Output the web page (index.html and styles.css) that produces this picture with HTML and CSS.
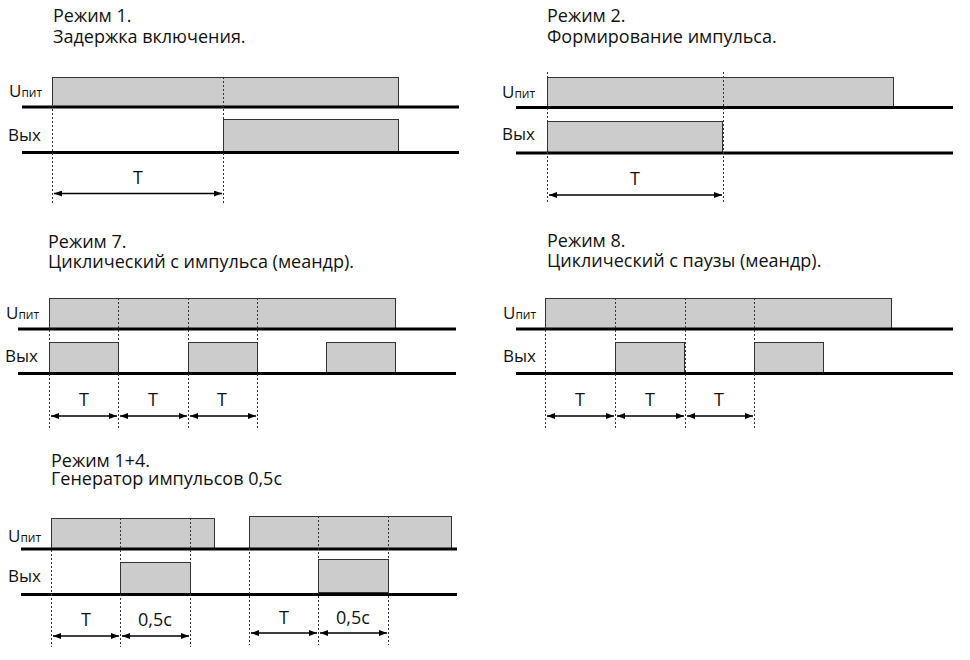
FILE: index.html
```html
<!DOCTYPE html>
<html lang="ru">
<head>
<meta charset="utf-8">
<title>Режимы работы</title>
<link rel="stylesheet" href="styles.css">
</head>
<body>
<svg class="defs" width="0" height="0" aria-hidden="true">
  <defs>
    <marker id="ah" viewBox="0 0 8 6" refX="8" refY="3" markerWidth="8" markerHeight="6" markerUnits="userSpaceOnUse" orient="auto-start-reverse">
      <path d="M0,0 L8,3 L0,6 Z" fill="#000"/>
    </marker>
  </defs>
</svg>
<main class="page">

  <section class="diagram d1">
    <div class="title">Режим 1.<br>Задержка включения.</div>
    <svg class="chart" width="490" height="177" viewBox="0 48 490 177">
      <rect class="box" x="52.5" y="77.5" width="346" height="30"/>
      <rect class="box" x="223.5" y="119.5" width="175" height="33"/>
      <line class="base" x1="22" y1="107" x2="459" y2="107"/>
      <line class="base" x1="22" y1="152.5" x2="459" y2="152.5"/>
      <line class="dash" x1="52.5" y1="77" x2="52.5" y2="204"/>
      <line class="dash" x1="223.5" y1="77" x2="223.5" y2="204"/>
      <text class="lbl" x="9" y="97">U<tspan class="sub">пит</tspan></text>
      <text class="lbl" x="8" y="141">Вых</text>
      <text class="tl" x="138" y="184">T</text>
      <line class="arr" x1="54" y1="193.5" x2="222" y2="193.5"/>
    </svg>
  </section>

  <section class="diagram d2">
    <div class="title">Режим 2.<br>Формирование импульса.</div>
    <svg class="chart" width="480" height="177" viewBox="0 48 480 177">
      <rect class="box" x="57.5" y="77.5" width="346" height="30"/>
      <rect class="box" x="57.5" y="121.5" width="175" height="32"/>
      <line class="base" x1="26" y1="107.5" x2="463" y2="107.5"/>
      <line class="base" x1="26" y1="153" x2="463" y2="153"/>
      <line class="dash" x1="57.5" y1="72" x2="57.5" y2="203"/>
      <line class="dash" x1="233.5" y1="72" x2="233.5" y2="203"/>
      <text class="lbl" x="12" y="98">U<tspan class="sub">пит</tspan></text>
      <text class="lbl" x="12" y="140">Вых</text>
      <text class="tl" x="145" y="185">T</text>
      <line class="arr" x1="59" y1="195" x2="232" y2="195"/>
    </svg>
  </section>

  <section class="diagram d3">
    <div class="title">Режим 7.<br>Циклический с импульса (меандр).</div>
    <svg class="chart" width="490" height="174" viewBox="0 48 490 174">
      <rect class="box" x="49.5" y="73.5" width="346" height="30"/>
      <rect class="box" x="49.5" y="117.5" width="69" height="31"/>
      <rect class="box" x="188.5" y="117.5" width="69" height="31"/>
      <rect class="box" x="326.5" y="117.5" width="69" height="31"/>
      <line class="base" x1="18" y1="104" x2="456" y2="104"/>
      <line class="base" x1="18" y1="148.5" x2="456" y2="148.5"/>
      <line class="dash" x1="49.5" y1="73" x2="49.5" y2="203"/>
      <line class="dash" x1="118.5" y1="73" x2="118.5" y2="203"/>
      <line class="dash" x1="188.5" y1="73" x2="188.5" y2="203"/>
      <line class="dash" x1="257.5" y1="73" x2="257.5" y2="203"/>
      <text class="lbl" x="6" y="94">U<tspan class="sub">пит</tspan></text>
      <text class="lbl" x="5" y="137">Вых</text>
      <text class="tl" x="84" y="181">T</text>
      <text class="tl" x="153" y="181">T</text>
      <text class="tl" x="222" y="181">T</text>
      <line class="arr" x1="51" y1="191" x2="117" y2="191"/>
      <line class="arr" x1="120" y1="191" x2="187" y2="191"/>
      <line class="arr" x1="190" y1="191" x2="256" y2="191"/>
    </svg>
  </section>

  <section class="diagram d4">
    <div class="title">Режим 8.<br>Циклический с паузы (меандр).</div>
    <svg class="chart" width="480" height="174" viewBox="0 48 480 174">
      <rect class="box" x="55.5" y="73.5" width="346" height="30"/>
      <rect class="box" x="125.5" y="117.5" width="69" height="31"/>
      <rect class="box" x="264.5" y="117.5" width="69" height="31"/>
      <line class="base" x1="26" y1="104" x2="463" y2="104"/>
      <line class="base" x1="26" y1="148.5" x2="463" y2="148.5"/>
      <line class="dash" x1="55.5" y1="73" x2="55.5" y2="203"/>
      <line class="dash" x1="125.5" y1="73" x2="125.5" y2="203"/>
      <line class="dash" x1="195.5" y1="73" x2="195.5" y2="203"/>
      <line class="dash" x1="264.5" y1="73" x2="264.5" y2="203"/>
      <text class="lbl" x="13" y="94">U<tspan class="sub">пит</tspan></text>
      <text class="lbl" x="13" y="137">Вых</text>
      <text class="tl" x="90" y="181">T</text>
      <text class="tl" x="160" y="181">T</text>
      <text class="tl" x="229" y="181">T</text>
      <line class="arr" x1="57" y1="191" x2="124" y2="191"/>
      <line class="arr" x1="127" y1="191" x2="194" y2="191"/>
      <line class="arr" x1="197" y1="191" x2="263" y2="191"/>
    </svg>
  </section>

  <section class="diagram d5">
    <div class="title">Режим 1+4.<br>Генератор импульсов 0,5с</div>
    <svg class="chart" width="490" height="165" viewBox="0 48 490 165">
      <rect class="box" x="51.5" y="71.5" width="163" height="31"/>
      <rect class="box" x="249.5" y="69.5" width="202" height="32"/>
      <rect class="box" x="120.5" y="115.5" width="70" height="32"/>
      <rect class="box" x="318.5" y="112.5" width="70" height="33"/>
      <line class="base" x1="21" y1="102" x2="457" y2="102"/>
      <line class="base" x1="21" y1="147.5" x2="457" y2="147.5"/>
      <line class="dash" x1="51.5" y1="71" x2="51.5" y2="200"/>
      <line class="dash" x1="120.5" y1="71" x2="120.5" y2="200"/>
      <line class="dash" x1="190.5" y1="71" x2="190.5" y2="200"/>
      <line class="dash" x1="249.5" y1="69" x2="249.5" y2="198"/>
      <line class="dash" x1="318.5" y1="69" x2="318.5" y2="198"/>
      <line class="dash" x1="388.5" y1="69" x2="388.5" y2="198"/>
      <text class="lbl" x="8" y="95">U<tspan class="sub">пит</tspan></text>
      <text class="lbl" x="8" y="135">Вых</text>
      <text class="tl" x="86" y="179">T</text>
      <text class="tl" x="155" y="179">0,5с</text>
      <text class="tl" x="284" y="177">T</text>
      <text class="tl" x="353" y="177">0,5с</text>
      <line class="arr" x1="53" y1="189" x2="119" y2="189"/>
      <line class="arr" x1="122" y1="189" x2="189" y2="189"/>
      <line class="arr" x1="251" y1="186" x2="317" y2="186"/>
      <line class="arr" x1="320" y1="186" x2="387" y2="186"/>
    </svg>
  </section>

</main>
</body>
</html>
```

FILE: styles.css
```css
html, body {
  margin: 0;
  padding: 0;
  background: #ffffff;
}

body {
  font-family: "Open Sans", "Noto Sans", "Liberation Sans", sans-serif;
  color: #111111;
  width: 970px;
  height: 660px;
  overflow: hidden;
}

.defs {
  position: absolute;
  width: 0;
  height: 0;
}

.page {
  display: grid;
  grid-template-columns: 490px 480px;
  grid-template-rows: 225px 222px 213px;
}

.diagram {
  display: flex;
  flex-direction: column;
}

.title {
  box-sizing: border-box;
  height: 48px;
  font-size: 18px;
  line-height: 21px;
  white-space: nowrap;
}

.d1 .title { padding: 5px 0 0 53px; }
.d2 .title { padding: 5px 0 0 57px; }
.d3 .title { padding: 6px 0 0 48px; line-height: 20px; }
.d4 .title { padding: 5px 0 0 57px; line-height: 20px; }
.d5 .title { padding: 4px 0 0 51px; line-height: 18px; }

.chart {
  display: block;
  overflow: visible;
}

.box {
  fill: #cccccc;
  stroke: #333333;
  stroke-width: 1;
}

.base {
  stroke: #000000;
  stroke-width: 3;
}

.dash {
  stroke: #333333;
  stroke-width: 1;
  stroke-dasharray: 2 2;
}

.arr {
  stroke: #000000;
  stroke-width: 1.5;
  marker-start: url(#ah);
  marker-end: url(#ah);
}

.lbl {
  font-family: "Open Sans", "Noto Sans", sans-serif;
  font-size: 17px;
  fill: #111111;
}

.sub {
  font-size: 12px;
}

.tl {
  font-family: "Open Sans", "Noto Sans", sans-serif;
  font-size: 18px;
  fill: #111111;
  text-anchor: middle;
}
```
